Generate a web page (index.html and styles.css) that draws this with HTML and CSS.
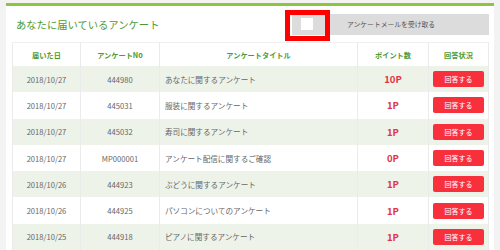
FILE: index.html
```html
<!DOCTYPE html>
<html lang="ja">
<head>
    <meta charset="UTF-8">
    <title>あなたに届いているアンケート</title>
    <link rel="stylesheet" href="styles.css">
</head>
<body>
    <div class="card">
        <!-- Header -->
        <div class="card-head">
            <h1>あなたに届いているアンケート</h1>
            <div class="mail-setting">
                <span class="toggle"><span class="knob"></span></span>
                <span class="mail-label">アンケートメールを受け取る</span>
                <span class="highlight"></span>
            </div>
        </div>

        <!-- Survey list -->
        <table class="survey-table">
            <colgroup>
                <col class="c-date">
                <col class="c-no">
                <col class="c-title">
                <col class="c-point">
                <col class="c-status">
            </colgroup>
            <thead>
                <tr>
                    <th>届いた日</th>
                    <th>アンケートNo</th>
                    <th>アンケートタイトル</th>
                    <th>ポイント数</th>
                    <th>回答状況</th>
                </tr>
            </thead>
            <tbody>
                <tr>
                    <td>2018/10/27</td><td>444980</td><td class="title">あなたに関するアンケート</td>
                    <td class="point">10P</td><td><button class="answer">回答する</button></td>
                </tr>
                <tr>
                    <td>2018/10/27</td><td>445031</td><td class="title">服装に関するアンケート</td>
                    <td class="point">1P</td><td><button class="answer">回答する</button></td>
                </tr>
                <tr>
                    <td>2018/10/27</td><td>445032</td><td class="title">寿司に関するアンケート</td>
                    <td class="point">1P</td><td><button class="answer">回答する</button></td>
                </tr>
                <tr>
                    <td>2018/10/27</td><td>MP000001</td><td class="title">アンケート配信に関するご確認</td>
                    <td class="point">0P</td><td><button class="answer">回答する</button></td>
                </tr>
                <tr>
                    <td>2018/10/26</td><td>444923</td><td class="title">ぶどうに関するアンケート</td>
                    <td class="point">1P</td><td><button class="answer">回答する</button></td>
                </tr>
                <tr>
                    <td>2018/10/26</td><td>444925</td><td class="title">パソコンについてのアンケート</td>
                    <td class="point">1P</td><td><button class="answer">回答する</button></td>
                </tr>
                <tr>
                    <td>2018/10/25</td><td>444918</td><td class="title">ピアノに関するアンケート</td>
                    <td class="point">1P</td><td><button class="answer">回答する</button></td>
                </tr>
            </tbody>
        </table>
    </div>
</body>
</html>
```

FILE: styles.css
```css
/* General */
html, body {
    margin: 0;
    background-color: #f3f3f3;
    font-family: "Noto Sans CJK JP", "Noto Sans", sans-serif;
    color: #666;
}
.card {
    margin: 3px 6px 0;
    padding: 0 6px;
    background-color: white;
    border-top: 3px solid #8cc63f;
}

/* Header */
.card-head {
    height: 36px;
    display: flex;
    justify-content: space-between;
    align-items: center;
}
.card-head h1 {
    margin: 0 0 0 4px;
    font-size: 10.3px;
    font-weight: normal;
    color: #4e9a34;
}
.mail-setting {
    position: relative;
    width: 199px;
    height: 21px;
    margin-right: -1px;
    display: flex;
    align-items: center;
    background-color: #dcdcdc;
}
.toggle {
    flex: none;
    width: 34px;
    height: 21px;
    border-left: 2px solid white;
    display: flex;
    align-items: center;
    padding-left: 9px;
    box-sizing: border-box;
}
.knob {
    width: 12px;
    height: 12px;
    background-color: white;
}
.mail-label {
    margin-left: 23px;
    font-size: 6.8px;
    color: #555;
}
.highlight {
    position: absolute;
    left: -5px;
    top: -4px;
    width: 45px;
    height: 31px;
    border: 5px solid #ff0000;
    box-sizing: border-box;
}

/* Table */
.survey-table {
    width: 100%;
    border-collapse: collapse;
    table-layout: fixed;
}
.c-date { width: 68px; }
.c-no { width: 79px; }
.c-title { width: 198px; }
.c-point { width: 71px; }
.c-status { width: 60px; }
.survey-table th, .survey-table td {
    border-left: 1px solid #ebebeb;
    border-right: 1px solid #ebebeb;
    text-align: center;
    padding: 0;
}
.survey-table th {
    height: 23px;
    border-top: 1px solid #f0f0f0;
    font-size: 7.2px;
    font-weight: bold;
    color: #4e9a34;
}
.survey-table td {
    height: 26.3px;
    font-size: 7.6px;
    color: #666;
}
.survey-table tbody tr:nth-child(odd) {
    background-color: #eef3ea;
}
.survey-table td.title {
    text-align: left;
    padding-left: 5px;
}
.survey-table td.point {
    font-size: 9.5px;
    font-weight: bold;
    color: #e23546;
}
.answer {
    width: 51px;
    height: 16px;
    border: none;
    border-radius: 2px;
    background-color: #f8303c;
    color: white;
    font-family: inherit;
    font-size: 7px;
    padding: 0;
    display: block;
    margin: 0 0 0 4px;
}
```
